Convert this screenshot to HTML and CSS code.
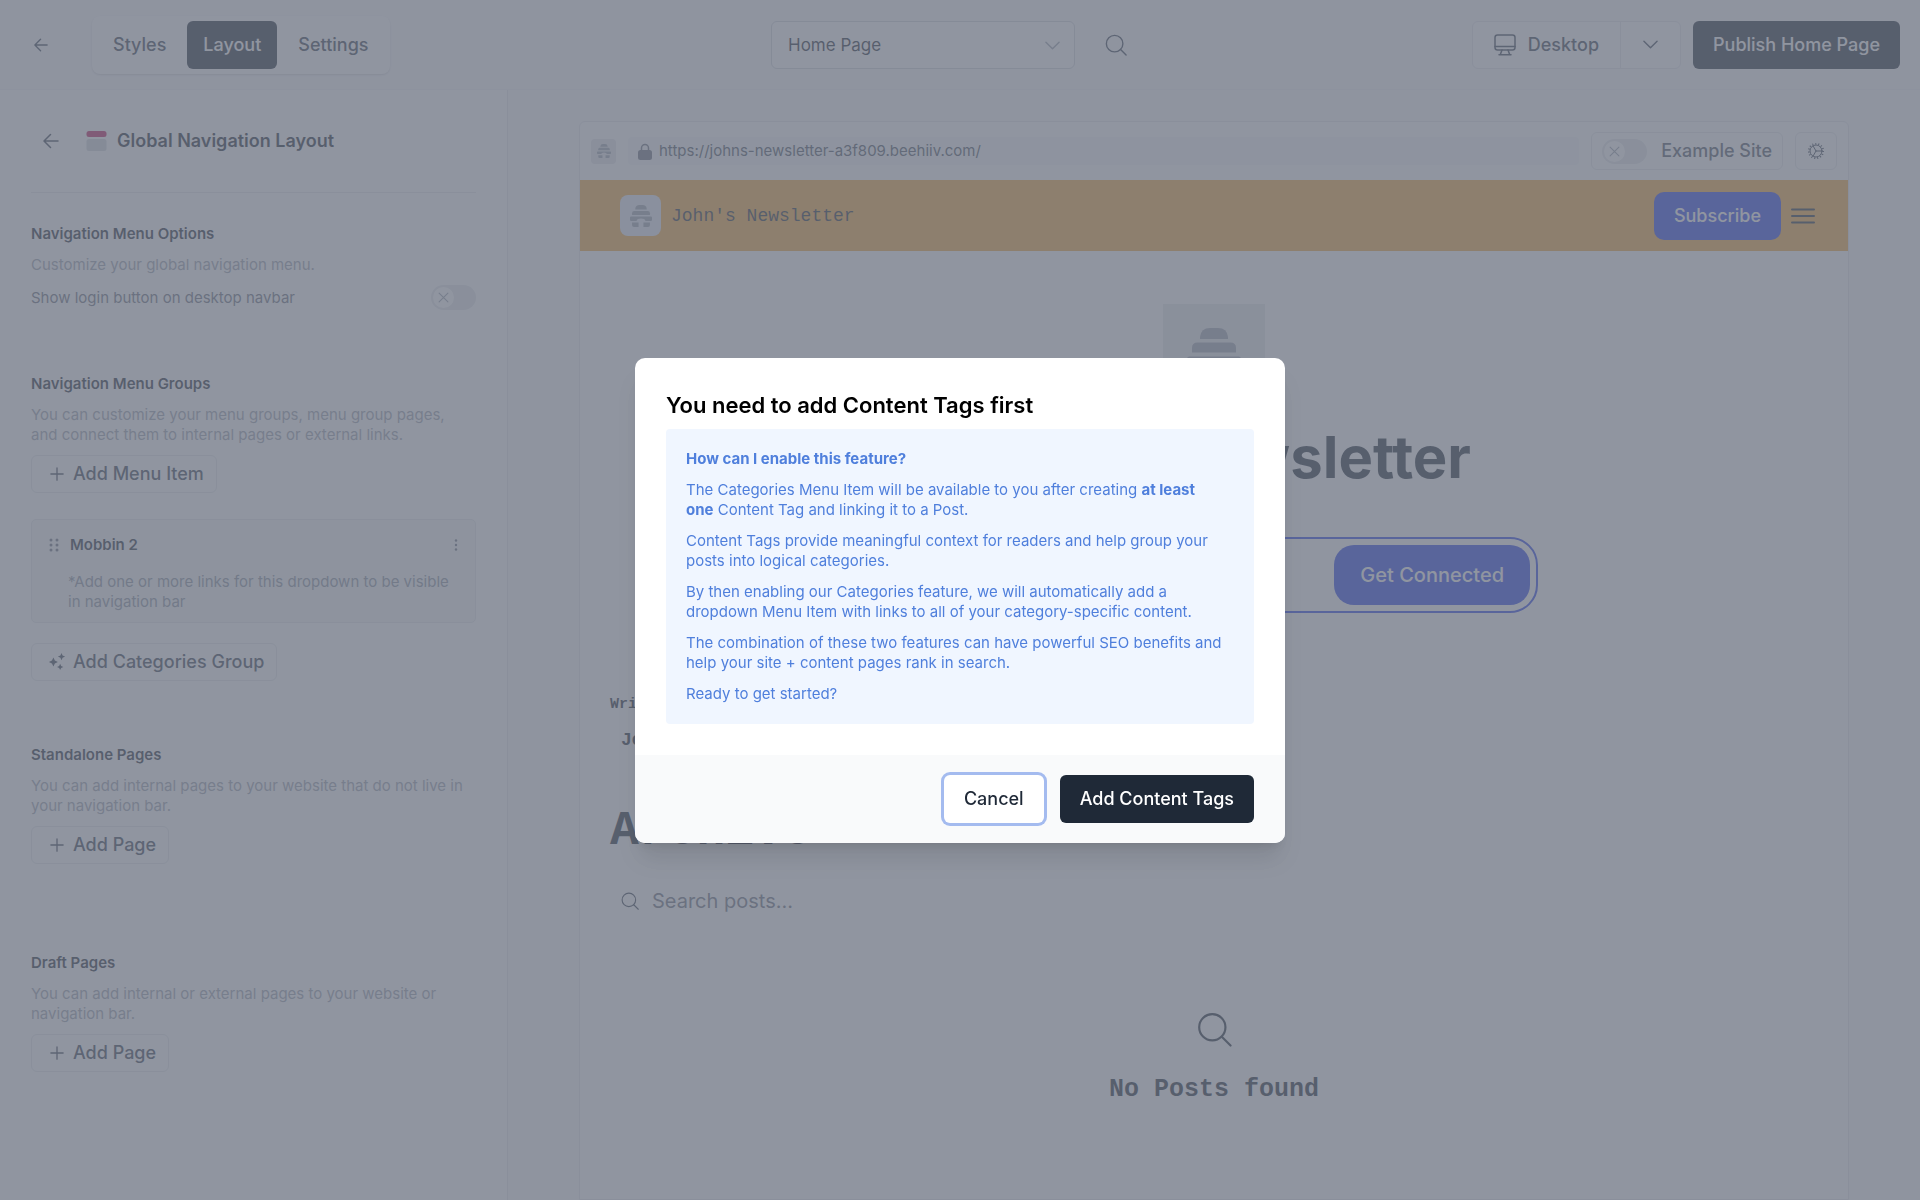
FILE: index.html
```html
<!DOCTYPE html>
<html lang="en">
<head>
    <meta charset="UTF-8">
    <meta name="viewport" content="width=device-width, initial-scale=1.0">
    <title>Website Builder</title>
    <link rel="stylesheet" href="styles.css">
</head>
<body>
    <!-- shared icons -->
    <svg class="sprite" aria-hidden="true">
        <symbol id="arrow-left" viewBox="0 0 16 16"><path d="M15 8H1.5M7.500 1.500L1 8l6.500 6.500"/></symbol>
        <symbol id="chevron" viewBox="0 0 16 10"><path d="M1 1l7 7 7-7"/></symbol>
        <symbol id="search" viewBox="0 0 24 24"><circle cx="10.500" cy="10.500" r="9"/><path d="M17 17l6 6"/></symbol>
        <symbol id="plus" viewBox="0 0 16 16"><path d="M8 1v14M1 8h14"/></symbol>
        <symbol id="cross" viewBox="0 0 10 10"><path d="M1 1l8 8M9 1L1 9"/></symbol>
        <symbol id="hive" viewBox="0 0 54 54">
            <path d="M13 11V9q1-9 10-9h8q9 0 10 9v2z"/>
            <path d="M5 24.500V20q0-5.500 5.500-5.500h33q5.500 0 5.500 5.500v4.500z"/>
            <path d="M2.500 28.500h49q2.500 0 2.500 2.500v5q0 3-3 3H38q-1-6-11-6t-11 6H3q-3 0-3-3v-5q0-2.500 2.500-2.500z"/>
            <path d="M5 43h16v11H10q-5 0-5-5zM33 43h16v6q0 5-5 5H33z"/>
        </symbol>
    </svg>

    <header class="topbar">
        <div class="topbar-left">
            <button class="icon-btn" type="button" aria-label="Back"><svg class="icon icon-14"><use href="#arrow-left"/></svg></button>
            <nav class="tabs">
                <button class="tab" type="button">Styles</button>
                <button class="tab active" type="button">Layout</button>
                <button class="tab" type="button">Settings</button>
            </nav>
        </div>
        <div class="topbar-center">
            <div class="page-select">
                <select aria-label="Page">
                    <option>Home Page</option>
                </select>
                <svg class="icon chevron faded"><use href="#chevron"/></svg>
            </div>
            <button class="icon-btn search-btn" type="button" aria-label="Search"><svg class="icon icon-22"><use href="#search"/></svg></button>
        </div>
        <div class="topbar-right">
            <div class="device">
                <button class="device-name" type="button">
                    <svg class="icon icon-22" viewBox="0 0 22 22"><rect x="1" y="1" width="20" height="15" rx="2.500"/><path d="M1 12.500h20M8 16l-1.500 4M14 16l1.500 4M5 20.800h12"/></svg>
                    Desktop
                </button>
                <button class="device-more" type="button" aria-label="More devices"><svg class="icon chevron"><use href="#chevron"/></svg></button>
            </div>
            <button class="btn-dark" type="button">Publish Home Page</button>
        </div>
    </header>

    <div class="workspace">
        <aside class="sidebar">
            <div class="sidebar-title">
                <button class="icon-btn" type="button" aria-label="Back to layout"><svg class="icon icon-16"><use href="#arrow-left"/></svg></button>
                <svg class="nav-icon" viewBox="0 0 20 20"><rect width="20" height="6" rx="2.500" fill="#be185d"/><rect y="8" width="20" height="12" rx="2.500" fill="#d1d5db"/></svg>
                <h1>Global Navigation Layout</h1>
            </div>

            <section class="options">
                <h2>Navigation Menu Options</h2>
                <p>Customize your global navigation menu.</p>
                <div class="option-row">
                    <label for="showLogin">Show login button on desktop navbar</label>
                    <span class="toggle">
                        <input type="checkbox" id="showLogin">
                        <svg class="icon"><use href="#cross"/></svg>
                    </span>
                </div>
            </section>

            <section class="groups">
                <h2>Navigation Menu Groups</h2>
                <p>You can customize your menu groups, menu group pages, and connect them to internal pages or external links.</p>
                <button class="btn-add" type="button"><svg class="icon"><use href="#plus"/></svg>Add Menu Item</button>
                <div class="group-card">
                    <div class="group-head">
                        <svg class="dots grip" viewBox="0 0 10 14"><circle cx="2" cy="2" r="1.500"/><circle cx="8" cy="2" r="1.500"/><circle cx="2" cy="7" r="1.500"/><circle cx="8" cy="7" r="1.500"/><circle cx="2" cy="12" r="1.500"/><circle cx="8" cy="12" r="1.500"/></svg>
                        <h3>Mobbin 2</h3>
                        <button class="icon-btn" type="button" aria-label="Group menu"><svg class="dots more" viewBox="0 0 4 12"><circle cx="2" cy="1.500" r="1.200"/><circle cx="2" cy="6" r="1.200"/><circle cx="2" cy="10.500" r="1.200"/></svg></button>
                    </div>
                    <p>*Add one or more links for this dropdown to be visible in navigation bar</p>
                </div>
                <button class="btn-add" type="button">
                    <svg class="sparkles" viewBox="0 0 20 20"><path d="M6 5l1.600 3.400L11 10l-3.400 1.600L6 15l-1.600-3.400L1 10l3.400-1.600zM15 0l1.200 2.800L19 4l-2.800 1.200L15 8l-1.200-2.800L11 4l2.800-1.200zM13.500 12l1.100 2.400L17 15.500l-2.400 1.100L13.500 19l-1.100-2.400L10 15.500l2.400-1.100z"/></svg>Add Categories Group
                </button>
            </section>

            <section class="standalone">
                <h2>Standalone Pages</h2>
                <p>You can add internal pages to your website that do not live in your navigation bar.</p>
                <button class="btn-add" type="button"><svg class="icon"><use href="#plus"/></svg>Add Page</button>
            </section>

            <section>
                <h2>Draft Pages</h2>
                <p>You can add internal or external pages to your website or navigation bar.</p>
                <button class="btn-add" type="button"><svg class="icon"><use href="#plus"/></svg>Add Page</button>
            </section>
        </aside>

        <main class="preview">
            <div class="browser">
                <div class="browser-bar">
                    <span class="favicon"><svg><use href="#hive"/></svg></span>
                    <div class="url">
                        <svg viewBox="0 0 14 17"><path d="M3.500 8V5a3.500 3.500 0 0 1 7 0v3" fill="none" stroke="currentColor" stroke-width="1.500"/><rect y="7" width="14" height="10" rx="2.500" fill="currentColor"/></svg>
                        https://johns-newsletter-a3f809.beehiiv.com/
                    </div>
                    <div class="example">
                        <span class="toggle">
                            <input type="checkbox" id="exampleSite">
                            <svg class="icon"><use href="#cross"/></svg>
                        </span>
                        <label for="exampleSite">Example Site</label>
                    </div>
                    <button class="gear" type="button" aria-label="Site settings">
                        <svg class="icon icon-16" viewBox="0 0 16 16"><circle cx="8" cy="8" r="6"/><circle class="teeth" cx="8" cy="8" r="7.200"/><path d="M8 8h6M8 8L5 2.800M8 8l-3 5.200"/></svg>
                    </button>
                </div>

                <div class="site-nav">
                    <span class="site-logo"><svg><use href="#hive"/></svg></span>
                    <span class="site-name">John's Newsletter</span>
                    <button class="subscribe" type="button">Subscribe</button>
                    <button class="icon-btn" type="button" aria-label="Menu"><svg class="burger" viewBox="0 0 24 16"><path d="M1 1.500h22M1 8h22M1 14.500h22"/></svg></button>
                </div>

                <div class="hero">
                    <span class="hero-logo"><svg><use href="#hive"/></svg></span>
                    <h2>John's Newsletter</h2>
                    <form class="signup">
                        <input type="email" aria-label="Email">
                        <button type="button">Get Connected</button>
                    </form>
                </div>

                <div class="archive">
                    <p class="written">Written by</p>
                    <p class="author">John</p>
                    <h2>Archive</h2>
                    <div class="post-search">
                        <svg class="icon icon-18"><use href="#search"/></svg>
                        <input type="text" placeholder="Search posts..." aria-label="Search posts">
                    </div>
                    <div class="no-posts">
                        <svg class="icon"><use href="#search"/></svg>
                        <h3>No Posts found</h3>
                    </div>
                </div>
            </div>
        </main>
    </div>

    <div class="overlay">
        <div class="modal" role="dialog" aria-modal="true" aria-labelledby="modalTitle">
            <div class="modal-body">
                <h2 id="modalTitle">You need to add Content Tags first</h2>
                <div class="notice">
                    <p><strong>How can I enable this feature?</strong></p>
                    <p>The Categories Menu Item will be available to you after creating <strong>at least one</strong> Content Tag and linking it to a Post.</p>
                    <p>Content Tags provide meaningful context for readers and help group your posts into logical categories.</p>
                    <p>By then enabling our Categories feature, we will automatically add a dropdown Menu Item with links to all of your category-specific content.</p>
                    <p>The combination of these two features can have powerful SEO benefits and help your site + content pages rank in search.</p>
                    <p>Ready to get started?</p>
                </div>
            </div>
            <div class="modal-footer">
                <button class="btn-cancel" type="button">Cancel</button>
                <button class="btn-dark" type="button">Add Content Tags</button>
            </div>
        </div>
    </div>
</body>
</html>
```

FILE: styles.css
```css
* {
    box-sizing: border-box;
}

body {
    margin: 0;
    height: 100vh;
    display: flex;
    flex-direction: column;
    overflow: hidden;
    font-family: Inter, "Liberation Sans", sans-serif;
    font-size: 15px;
    line-height: 20px;
    color: #1f2937;
    background-color: #fff;
}

h1, h2, h3, p {
    margin: 0;
}

button, input, select {
    font: inherit;
    color: inherit;
}

button {
    cursor: pointer;
}

.sprite {
    position: absolute;
    width: 0;
    height: 0;
}

.icon {
    fill: none;
    stroke: currentColor;
    stroke-width: 1.5;
    stroke-linecap: round;
    stroke-linejoin: round;
}

.icon-14 { width: 14px; height: 14px; }
.icon-16 { width: 16px; height: 16px; }
.icon-18 { width: 18px; height: 18px; }
.icon-22 { width: 22px; height: 22px; }

.chevron {
    width: 15px;
    height: 10px;
}

.icon-btn {
    display: flex;
    padding: 0;
    border: none;
    background: none;
    color: #374151;
}

/* top bar */
.topbar {
    flex: none;
    display: grid;
    grid-template-columns: 1fr auto 1fr;
    align-items: center;
    height: 90px;
    padding: 0 20px;
    background-color: #fafafc;
    border-bottom: 1px solid #f3f4f6;
    font-size: 18px;
    font-weight: 500;
}

.topbar-left, .topbar-center, .topbar-right {
    display: flex;
    align-items: center;
}

.topbar-left {
    gap: 44px;
    padding-left: 14px;
}

.topbar-center {
    gap: 8px;
}

.search-btn {
    padding: 0 22px;
}

.topbar-right {
    justify-content: flex-end;
    gap: 12px;
}

.tabs {
    display: flex;
    gap: 5px;
    padding: 5px;
    border-radius: 8px;
    background-color: #fff;
    box-shadow: 0 1px 2px rgba(0, 0, 0, 0.15);
}

.tab {
    height: 48px;
    padding: 0 16px;
    border: none;
    border-radius: 6px;
    background: none;
    color: #374151;
}

.tab.active {
    background-color: #1f2937;
    color: #fff;
}

.page-select {
    position: relative;
    width: 304px;
    font-size: 17px;
    font-weight: 400;
}

.page-select select {
    appearance: none;
    width: 100%;
    height: 48px;
    padding: 0 16px;
    border: 1px solid #d1d5db;
    border-radius: 6px;
    background-color: #fff;
}

.page-select .chevron {
    position: absolute;
    right: 15px;
    top: 20px;
    pointer-events: none;
}

.faded {
    color: #9ca3af;
}

.device {
    display: flex;
    height: 48px;
    border: 1px solid #e5e7eb;
    border-radius: 6px;
    background-color: #fff;
}

.device button {
    display: flex;
    align-items: center;
    justify-content: center;
    border: none;
    background: none;
    color: #374151;
}

.device-name {
    gap: 12px;
    padding: 0 21px;
}

.device .device-more {
    width: 60px;
    border-left: 1px solid #e5e7eb;
}

.btn-dark, .btn-cancel {
    height: 48px;
    padding: 0 20px;
    border: none;
    border-radius: 6px;
    background-color: #1f2937;
    color: #fff;
    font-size: 18px;
    font-weight: 500;
}

/* sidebar */
.workspace {
    flex: 1;
    min-height: 0;
    display: flex;
}

.sidebar {
    flex: none;
    width: 508px;
    padding: 0 31px;
    border-right: 1px solid #e5e7eb;
}

.sidebar-title {
    display: flex;
    align-items: center;
    height: 103px;
    padding-left: 12px;
    border-bottom: 1px solid #e5e7eb;
    margin-bottom: 31px;
}

.nav-icon {
    width: 21px;
    height: 20px;
    margin: 0 10px 0 27px;
}

.sidebar h1 {
    font-size: 18px;
    font-weight: 600;
}

.sidebar h2, .sidebar h3 {
    font-size: 15px;
    font-weight: 600;
}

.sidebar h2 {
    margin-bottom: 11px;
}

.sidebar p {
    padding-right: 8px;
    color: #9ca3af;
}

.option-row {
    display: flex;
    align-items: center;
    justify-content: space-between;
    margin-top: 10px;
    color: #6b7280;
}

.options {
    margin-bottom: 64px;
}

.toggle {
    position: relative;
    display: flex;
}

.toggle input {
    appearance: none;
    width: 45px;
    height: 25px;
    margin: 0;
    border-radius: 13px;
    background-color: #e5e7eb;
}

.toggle input::before {
    content: "";
    display: block;
    width: 21px;
    height: 21px;
    margin: 2px;
    border-radius: 50%;
    background-color: #fff;
}

.toggle .icon {
    position: absolute;
    left: 7px;
    top: 7px;
    width: 11px;
    height: 11px;
    stroke-width: 1;
    color: #9ca3af;
    pointer-events: none;
}

.btn-add {
    display: flex;
    align-items: center;
    gap: 7px;
    height: 38px;
    margin-top: 10px;
    padding: 0 12px 0 16px;
    border: 1px solid #e5e7eb;
    border-radius: 6px;
    background-color: #fff;
    color: #374151;
    font-size: 18px;
    font-weight: 500;
}

.btn-add svg {
    width: 18px;
    height: 18px;
}

.btn-add .icon {
    padding: 2px;
}

.sparkles {
    fill: currentColor;
}

.dots {
    fill: #6b7280;
}

.grip {
    width: 10px;
    height: 14px;
}

.more {
    width: 4px;
    height: 12px;
}

.group-card {
    margin: 26px 0 20px;
    padding: 15px 17px 10px;
    border: 1px solid #e5e7eb;
    border-radius: 5px;
    background-color: #f5f8f8;
}

.group-head {
    display: flex;
    align-items: center;
    gap: 11px;
    margin-bottom: 17px;
}

.group-head .icon-btn {
    margin-left: auto;
}

.group-card p {
    padding: 0 0 0 19px;
    color: #8b93a1;
}

.groups {
    margin-bottom: 64px;
}

.standalone {
    margin-bottom: 89px;
}

/* preview */
.preview {
    flex: 1;
    display: flex;
    padding: 31px 71px 0;
    background-color: #fafafc;
}

.browser {
    flex: 1;
    overflow: hidden;
    border: 1px solid #e5e7eb;
    border-radius: 6px 6px 0 0;
    background-color: #fff;
}

.browser-bar {
    display: flex;
    align-items: center;
    gap: 12px;
    height: 58px;
    padding: 0 11px;
}

.favicon {
    display: grid;
    place-items: center;
    width: 25px;
    height: 25px;
    border-radius: 4px;
    background-color: #e5e7eb;
    fill: #9ca3af;
}

.favicon svg {
    width: 14px;
    height: 14px;
}

.url {
    flex: 1;
    display: flex;
    align-items: center;
    gap: 7px;
    height: 28px;
    padding-left: 10px;
    border-radius: 4px;
    background-color: #f6f8fa;
    color: #4b5563;
}

.url svg {
    width: 14px;
    height: 17px;
    color: #6b7280;
}

.example, .gear {
    display: flex;
    align-items: center;
    height: 38px;
    border: 1px solid #e5e7eb;
    border-radius: 6px;
    background-color: #fff;
}

.example {
    gap: 14px;
    padding: 0 10px;
    color: #4b5563;
    font-size: 18px;
    font-weight: 500;
}

.gear {
    justify-content: center;
    width: 42px;
    padding: 0;
    color: #374151;
}

.gear .icon {
    stroke-width: 1;
}

.gear .teeth {
    stroke-width: 2;
    stroke-linecap: butt;
    stroke-dasharray: 1 2;
}

.site-nav {
    display: flex;
    align-items: center;
    gap: 10px;
    height: 71px;
    padding: 0 33px 0 40px;
    background-color: #f4a638;
}

.site-logo {
    display: grid;
    place-items: center;
    width: 41px;
    height: 41px;
    border-radius: 8px;
    background-color: #e5ebf5;
    fill: #9ca3af;
}

.site-logo svg {
    width: 22px;
    height: 22px;
}

.site-name, .archive {
    font-family: "Courier New", "Liberation Mono", monospace;
}

.site-name {
    flex: 1;
    font-size: 18px;
}

.subscribe {
    height: 48px;
    padding: 0 20px;
    border: none;
    border-radius: 10px;
    background-color: #2540ec;
    color: #fff;
    font-size: 18px;
    font-weight: 500;
}

.burger {
    width: 24px;
    height: 16px;
    stroke: #1f2937;
    stroke-width: 2;
    stroke-linecap: round;
}

.hero {
    display: flex;
    flex-direction: column;
    align-items: center;
    padding: 53px 0 82px;
}

.hero-logo {
    display: grid;
    place-items: center;
    width: 102px;
    height: 102px;
    background-color: #e8eaec;
    fill: #9ca3af;
}

.hero-logo svg {
    width: 54px;
    height: 54px;
}

.hero h2 {
    margin: 14px 0 42px;
    font-size: 58px;
    line-height: 75px;
    font-weight: 700;
}

.signup {
    display: flex;
    width: 648px;
    max-width: 100%;
    padding: 6px;
    border: 2px solid #2540ec;
    border-radius: 28px;
    background-color: #fff;
}

.signup input {
    flex: 1;
    min-width: 0;
    border: none;
    background: none;
}

.signup button {
    height: 60px;
    padding: 0 26px;
    border: none;
    border-radius: 20px;
    background-color: #2540ec;
    color: #fff;
    font-size: 20px;
    font-weight: 500;
}

.archive {
    padding: 0 30px;
    font-weight: 700;
}

.author {
    margin: 15px 0 51px 11px;
    font-size: 18px;
}

.archive h2 {
    font-size: 48px;
    line-height: 60px;
}

.post-search {
    display: flex;
    align-items: center;
    gap: 13px;
    height: 60px;
    margin-top: 10px;
    padding-left: 11px;
    color: #374151;
}

.post-search input {
    flex: 1;
    padding: 0;
    border: none;
    background: none;
    font-family: Inter, "Liberation Sans", sans-serif;
    font-size: 20px;
    font-weight: 400;
}

.post-search input::placeholder {
    color: #6b7280;
}

.no-posts {
    display: flex;
    flex-direction: column;
    align-items: center;
    gap: 28px;
    padding-top: 81px;
}

.no-posts .icon {
    width: 35px;
    height: 35px;
}

.no-posts h3 {
    font-size: 25px;
    line-height: 30px;
}

/* modal */
.overlay {
    position: fixed;
    inset: 0;
    display: flex;
    align-items: center;
    justify-content: center;
    background-color: rgba(107, 114, 128, 0.75);
}

.modal {
    width: 650px;
    overflow: hidden;
    border-radius: 10px;
    background-color: #fff;
    box-shadow: 0 20px 25px -5px rgba(0, 0, 0, 0.1), 0 8px 10px -6px rgba(0, 0, 0, 0.1);
}

.modal-body {
    padding: 31px;
}

.modal h2 {
    margin-bottom: 8px;
    font-size: 22px;
    line-height: 32px;
    font-weight: 600;
    color: #000;
}

.notice {
    display: flex;
    flex-direction: column;
    gap: 11px;
    padding: 20px 31px 20px 20px;
    border-radius: 4px;
    background-color: #f0f6ff;
    color: #4f7fdc;
}

.notice strong {
    font-weight: 700;
}

.modal-footer {
    display: flex;
    justify-content: flex-end;
    gap: 16px;
    padding: 20px 31px;
    background-color: #f9fafb;
}

.btn-cancel {
    background-color: #fff;
    color: #1f2937;
    box-shadow: 0 0 0 3px #a4bbef;
}
```
